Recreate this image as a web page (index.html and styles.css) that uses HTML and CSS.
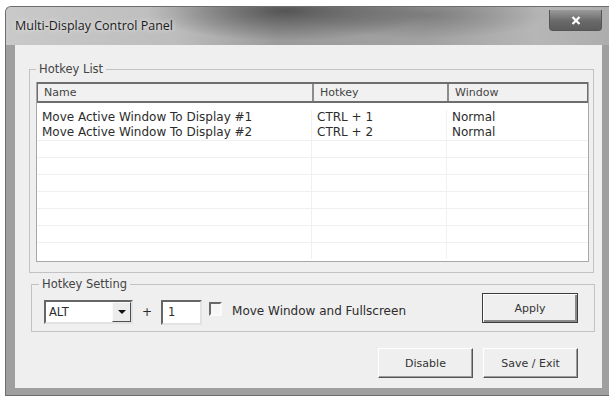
FILE: index.html
```html
<!doctype html>
<html lang="en">
  <head>
    <meta charset="UTF-8" />
    <meta name="viewport" content="width=device-width, initial-scale=1.0" />
    <title>Multi-Display Control Panel</title>
    <link rel="stylesheet" href="styles.css">
  </head>
  <body>
    <div class="window">
      <div class="titlebar">
        <span class="title">Multi-Display Control Panel</span>
        <span class="close">
          <svg width="10" height="9" viewBox="0 0 10 9">
            <path d="M1.5 1 L8.5 8 M8.5 1 L1.5 8" stroke="#fff" stroke-width="2.2" fill="none" />
          </svg>
        </span>
      </div>

      <div class="client">
        <fieldset class="group group-list">
          <legend>Hotkey List</legend>
          <div class="listview">
            <div class="lv-head">
              <span class="hcell">Name</span>
              <span class="hcell">Hotkey</span>
              <span class="hcell">Window</span>
            </div>
            <div class="lv-body">
              <div class="lv-row">
                <span class="cell">Move Active Window To Display #1</span>
                <span class="cell">CTRL + 1</span>
                <span class="cell">Normal</span>
              </div>
              <div class="lv-row">
                <span class="cell">Move Active Window To Display #2</span>
                <span class="cell">CTRL + 2</span>
                <span class="cell">Normal</span>
              </div>
              <div class="lv-row empty"><span class="cell"></span><span class="cell"></span><span class="cell"></span></div>
              <div class="lv-row empty"><span class="cell"></span><span class="cell"></span><span class="cell"></span></div>
              <div class="lv-row empty"><span class="cell"></span><span class="cell"></span><span class="cell"></span></div>
              <div class="lv-row empty"><span class="cell"></span><span class="cell"></span><span class="cell"></span></div>
              <div class="lv-row empty"><span class="cell"></span><span class="cell"></span><span class="cell"></span></div>
              <div class="lv-row empty"><span class="cell"></span><span class="cell"></span><span class="cell"></span></div>
              <div class="lv-row empty"><span class="cell"></span><span class="cell"></span><span class="cell"></span></div>
            </div>
          </div>
        </fieldset>

        <fieldset class="group group-setting">
          <legend>Hotkey Setting</legend>
          <div class="combo">
            <span class="combo-text">ALT</span>
            <span class="combo-btn"><span class="arrow"></span></span>
          </div>
          <span class="plus">+</span>
          <div class="textbox">1</div>
          <span class="checkbox"></span>
          <span class="check-label">Move Window and Fullscreen</span>
          <button class="btn btn-default">Apply</button>
        </fieldset>

        <div class="actions">
          <button class="btn">Disable</button>
          <button class="btn">Save / Exit</button>
        </div>
      </div>
    </div>
  </body>
</html>
```

FILE: styles.css
```css
* {
  box-sizing: border-box;
}

html,
body {
  margin: 0;
  background: #fff;
}

body {
  padding: 6px 0 0 5px;
  font-family: "DejaVu Sans", Verdana, sans-serif;
  font-size: 12px;
  color: #2c2c2c;
}

.window {
  width: 604px;
  height: 390px;
  display: flex;
  flex-direction: column;
  border: 1px solid #6d6d6d;
  border-right: 0;
  border-radius: 6px 0 0 0;
  background: #9f9f9f;
}

.titlebar {
  height: 38px;
  display: flex;
  align-items: flex-start;
  padding: 10px 7px 0 9px;
  border-radius: 5px 0 0 0;
  background:
    radial-gradient(ellipse 140px 30px at 280px 4px, rgba(55, 55, 55, 0.7), transparent),
    radial-gradient(ellipse 120px 24px at 420px 8px, rgba(80, 80, 80, 0.45), transparent),
    linear-gradient(90deg, #c9c9c9 0%, #bdbdbd 28%, #9b9b9b 45%, #a2a2a2 70%, #b6b6b6 88%, #adadad 100%);
}

.title {
  font-family: "Open Sans", "Noto Sans", sans-serif;
  font-size: 12.5px;
  line-height: 18px;
  color: #1c1c1c;
  text-shadow: 0 0 5px rgba(255, 255, 255, 0.9);
}

.close {
  margin-left: auto;
  margin-top: -7px;
  width: 53px;
  height: 21px;
  display: flex;
  align-items: center;
  justify-content: center;
  border: 1px solid #555;
  border-top: 0;
  border-radius: 0 0 4px 4px;
  background: linear-gradient(#9a9a9a, #6a6a6a 55%, #5c5c5c);
}

.client {
  flex: 1;
  display: flex;
  flex-direction: column;
  margin: 0 7px 7px 9px;
  background: #efefef;
}

.group {
  margin: 0;
  min-width: 0;
  border: 1px solid #c2c2c2;
}

.group legend {
  padding: 0 3px;
  font-size: 11.5px;
  line-height: 14px;
  color: #444;
}

.group-list {
  margin: 17px 8px 0 14px;
  height: 211px;
  padding: 6px 4px 10px 6px;
}

.listview {
  height: 180px;
  border: 1px solid #a8a8a8;
  border-top: 0;
  background: #fff;
  overflow: hidden;
}

.lv-head {
  height: 21px;
  display: grid;
  grid-template-columns: 276px 135px 1fr;
  margin: 0 -1px;
  border: 2px solid #6e6e6e;
  background: #f1f1f1;
}

.hcell {
  padding-left: 6px;
  font-size: 11px;
  line-height: 17px;
  color: #444;
}

.hcell:not(:last-child) {
  border-right: 2px solid #8c8c8c;
}

.lv-body {
  padding-top: 7px;
}

.lv-row {
  height: 15px;
  display: grid;
  grid-template-columns: 275px 135px 1fr;
}

.lv-row.empty {
  height: 17px;
  border-top: 1px solid #efefef;
}

.cell {
  padding-left: 5px;
  line-height: 15px;
  white-space: nowrap;
}

.cell:not(:last-child) {
  border-right: 1px solid #f0f0f0;
}

.group-setting {
  margin: 4px 7px 0 16px;
  height: 55px;
  padding: 0 0 0 7px;
  display: flex;
  align-items: flex-start;
}

.combo {
  width: 89px;
  height: 24px;
  margin: 9px 0 0 5px;
  display: flex;
  align-items: center;
  border: 2px solid;
  border-color: #666 #e2e2e2 #e2e2e2 #666;
  background: #fff;
}

.combo-text {
  padding-left: 3px;
  font-size: 11.5px;
}

.combo-btn {
  margin-left: auto;
  width: 19px;
  height: 20px;
  display: flex;
  align-items: center;
  justify-content: center;
  border: 1px solid;
  border-color: #fafafa #4f4f4f #4f4f4f #fafafa;
  background: #ececec;
}

.arrow {
  width: 0;
  height: 0;
  border-left: 4px solid transparent;
  border-right: 4px solid transparent;
  border-top: 4px solid #111;
}

.plus {
  margin: 9px 0 0 9px;
  line-height: 24px;
}

.textbox {
  width: 41px;
  height: 25px;
  margin: 9px 0 0 9px;
  padding-left: 5px;
  line-height: 21px;
  font-size: 11.5px;
  border: 2px solid;
  border-color: #666 #e2e2e2 #e2e2e2 #666;
  background: #fff;
}

.checkbox {
  width: 13px;
  height: 14px;
  margin: 11px 0 0 7px;
  border: 2px solid;
  border-color: #6a6a6a #fafafa #fafafa #6a6a6a;
  background: #f7f7f7;
}

.check-label {
  margin: 8px 0 0 10px;
  line-height: 24px;
}

.btn {
  width: 95px;
  height: 30px;
  padding: 0;
  font-family: "DejaVu Sans", Verdana, sans-serif;
  font-size: 11px;
  color: #333;
  background: #efefef;
  border: 1px solid;
  border-color: #fff #555 #555 #fff;
  box-shadow: inset -1px -1px 0 #9c9c9c;
}

.btn-default {
  width: 96px;
  margin: 2px 16px 0 auto;
  border: 1px solid #3c3c3c;
  box-shadow: inset 1px 1px 0 #fff, inset -2px -2px 0 #8a8a8a;
}

.actions {
  margin-top: 16px;
  padding-right: 24px;
  display: flex;
  justify-content: flex-end;
  gap: 10px;
}
```
